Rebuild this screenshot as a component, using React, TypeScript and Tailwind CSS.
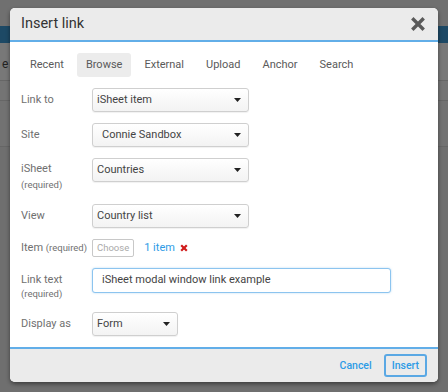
function Caret() {
  return (
    <svg width="7" height="4" viewBox="0 0 7 4" className="shrink-0">
      <path d="M0 0 L7 0 L3.5 4 Z" fill="#222" />
    </svg>
  )
}

function Select({ value, width, indent = false }: { value: string; width: string; indent?: boolean }) {
  return (
    <div
      className={`${width} h-[24px] flex items-center justify-between rounded-[3px] border border-[#cfcfcf] bg-gradient-to-b from-white to-[#f3f3f3] pr-[7px] shadow-[0_1px_1px_rgba(0,0,0,0.06)] ${indent ? 'pl-[9px]' : 'pl-[4px]'}`}
    >
      <span className="text-[11px] text-[#444]">{value}</span>
      <Caret />
    </div>
  )
}

function Label({ text, sub, tight = false }: { text: string; sub?: string; tight?: boolean }) {
  return (
    <div className="w-[71px] shrink-0 text-[11px] leading-[14px] text-[#707070]">
      <div>{text}</div>
      {sub && <div className={`text-[9.5px] leading-[12px] ${tight ? 'mt-[1px]' : 'mt-[3px]'}`}>{sub}</div>}
    </div>
  )
}

const tabs = ['Recent', 'Browse', 'External', 'Upload', 'Anchor', 'Search']

export default function App() {
  return (
    <div className="relative w-[448px] h-[392px] overflow-hidden bg-[#6f6f6f] font-['Roboto',sans-serif]">
      {/* dimmed page behind the modal */}
      <div className="flex flex-col">
        <div className="h-[26px] bg-[#707070]" />
        <div className="h-[17px] bg-[#1d4965]" />
        <div className="h-[38px] border-b border-[#666] bg-[#787878] pl-[2px] pt-[12px] text-[12px] text-[#222]">e</div>
        <div className="h-[20px] border-b border-[#666] bg-[#747474]" />
        <div className="h-[46px] border-b border-[#666] bg-[#727272]" />
        <div className="h-[200px] bg-[#6f6f6f]" />
      </div>

      {/* modal */}
      <div className="absolute left-[10px] top-[8px] w-[428px] h-[374px] flex flex-col overflow-hidden rounded-[5px] bg-white shadow-[0_2px_4px_rgba(0,0,0,0.45)]">
        <div className="h-[34px] shrink-0 flex items-center justify-between border-b-2 border-[#62aee8] bg-[#ebebeb] pl-[11px] pr-[13px]">
          <span className="text-[14.5px] text-[#333]">Insert link</span>
          <svg width="14" height="14" viewBox="0 0 14 14">
            <path d="M2.5 2.5 L11.5 11.5 M11.5 2.5 L2.5 11.5" stroke="#5a5a5a" strokeWidth="3.4" strokeLinecap="square" />
          </svg>
        </div>

        <div className="flex-1 px-[11px]">
          <div className="mt-[11px] flex items-center gap-[4px]">
            {tabs.map((t) => (
              <div
                key={t}
                className={`h-[24px] flex items-center rounded-[3px] px-[9px] text-[11px] text-[#5a5a5a] ${t === 'Browse' ? 'bg-[#ececec]' : ''}`}
              >
                {t}
              </div>
            ))}
          </div>

          <div className="mt-[11px] flex flex-col">
            <div className="flex items-center h-[24px]">
              <Label text="Link to" />
              <Select value="iSheet item" width="w-[157px]" />
            </div>
            <div className="mt-[11px] flex items-center h-[24px]">
              <Label text="Site" />
              <Select value="Connie Sandbox" width="w-[157px]" indent />
            </div>
            <div className="mt-[11px] flex items-start">
              <div className="pt-[4px]">
                <Label text="iSheet" sub="(required)" />
              </div>
              <Select value="Countries" width="w-[157px]" />
            </div>
            <div className="mt-[13px] flex items-center h-[24px]">
              <Label text="View" />
              <Select value="Country list" width="w-[157px]" />
            </div>
            <div className="mt-[11px] flex items-center h-[18px]">
              <div className="w-[71px] shrink-0 text-[11px] text-[#707070]">
                Item <span className="text-[9.5px]">(required)</span>
              </div>
              <div className="h-[18px] flex items-center rounded-[2px] border border-[#c8c8c8] bg-white px-[4px] text-[9.5px] text-[#aaa]">
                Choose
              </div>
              <span className="ml-[10px] text-[11px] text-[#2e9be6]">1 item</span>
              <svg width="8" height="8" viewBox="0 0 8 8" className="ml-[5px]">
                <path d="M1.2 1.2 L6.8 6.8 M6.8 1.2 L1.2 6.8" stroke="#d01b1b" strokeWidth="2.2" />
              </svg>
            </div>
            <div className="mt-[11px] flex items-start">
              <div className="pt-[5px]">
                <Label text="Link text" sub="(required)" tight />
              </div>
              <div className="w-[299px] h-[25px] flex items-center rounded-[3px] border border-[#8cc4ef] bg-white pl-[9px] shadow-[0_0_2px_rgba(98,174,232,0.5)] text-[11px] text-[#444]">
                iSheet modal window link example
              </div>
            </div>
            <div className="mt-[12px] flex items-center h-[24px]">
              <Label text="Display as" />
              <Select value="Form" width="w-[86px]" />
            </div>
          </div>
        </div>

        <div className="h-[35px] shrink-0 flex items-center justify-end gap-[12px] border-t-2 border-[#62aee8] bg-[#ebebeb] pr-[11px]">
          <span className="text-[10.5px] font-medium text-[#2e9be6]">Cancel</span>
          <div className="h-[23px] flex items-center rounded-[3px] border-2 border-[#5aa8e4] px-[6px] text-[10.5px] font-medium text-[#2e9be6]">
            Insert
          </div>
        </div>
      </div>
    </div>
  )
}
